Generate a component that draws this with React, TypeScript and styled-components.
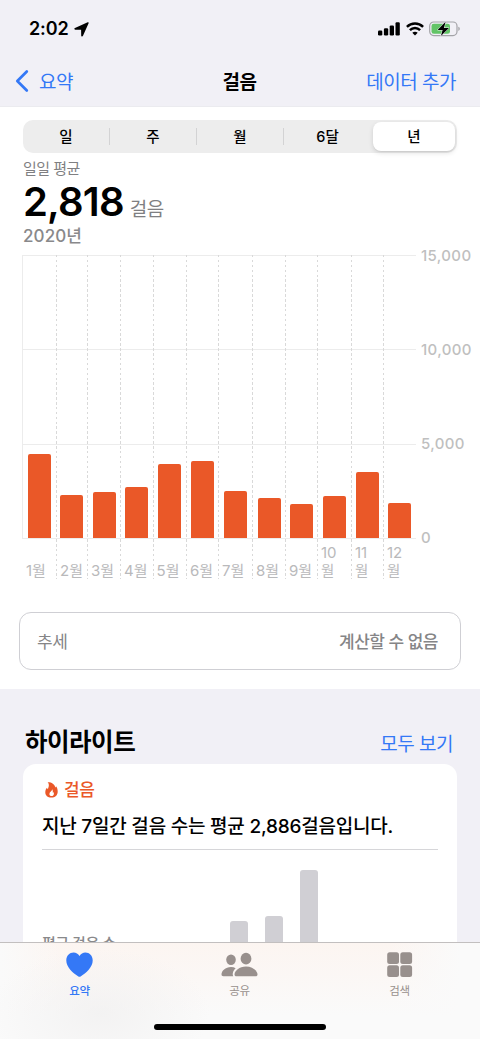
import React from 'react';
import styled, { createGlobalStyle } from 'styled-components';

const BLUE = '#3478f6';
const ORANGE = '#ea5828';

const GlobalStyle = createGlobalStyle`
  * { box-sizing: border-box; }
  body {
    margin: 0;
    font-family: Inter, "Noto Sans CJK KR", sans-serif;
    color: #000;
    background: #f1f0f6;
  }
`;

const Screen = styled.div`
  position: relative;
  width: 480px;
  height: 1039px;
  overflow: hidden;
  background: #f1f0f6;
  display: flex;
  flex-direction: column;
`;

const Label = styled.span<{ $size: number; $weight?: number; $color?: string; $track?: number; $line?: number }>`
  font-size: ${p => p.$size}px;
  font-weight: ${p => p.$weight ?? 400};
  color: ${p => p.$color ?? '#000'};
  letter-spacing: ${p => p.$track ?? 0}px;
  line-height: ${p => p.$line ?? 24}px;
  white-space: nowrap;
`;

const StatusBar = styled.div`
  height: 56px;
  flex: none;
  display: flex;
  align-items: center;
  justify-content: space-between;
  padding: 2px 19px 0 29px;
`;

const StatusGroup = styled.div<{ $gap: number }>`
  display: flex;
  align-items: center;
  gap: ${p => p.$gap}px;
`;

const NavBar = styled.div`
  height: 51px;
  flex: none;
  display: grid;
  grid-template-columns: 1fr auto 1fr;
  align-items: center;
  padding: 0 24px 0 15px;
  border-bottom: 1px solid #ebebef;
`;

const BackButton = styled.div`
  display: flex;
  align-items: center;
  gap: 9px;
`;

const BackText = styled.div`
  display: flex;
  padding-top: 3px;
`;

const NavTitle = styled.div`
  padding: 3px 0 0 8px;
  display: flex;
`;

const NavAction = styled.div`
  display: flex;
  justify-content: flex-end;
  padding-top: 3px;
`;

const Panel = styled.section`
  height: 582px;
  flex: none;
  background: #fff;
  padding-top: 13px;
`;

const Segmented = styled.div`
  margin: 0 23px;
  height: 33px;
  width: 434px;
  border-radius: 10px;
  background: #ededed;
  display: flex;
  align-items: center;
  padding: 2px 2px 2px 0;
`;

const Segment = styled.div<{ $active?: boolean; $divider?: boolean }>`
  flex: 0 0 ${p => (p.$active ? 82 : 87)}px;
  margin-left: ${p => (p.$active ? 'auto' : 0)};
  height: ${p => (p.$active ? 29 : 17)}px;
  display: flex;
  align-items: center;
  justify-content: center;
  border-right: ${p => (p.$divider ? '1px solid #d3d3d4' : '0')};
  border-radius: ${p => (p.$active ? 8 : 0)}px;
  background: ${p => (p.$active ? '#fff' : 'transparent')};
  box-shadow: ${p => (p.$active ? '0 2px 5px rgba(0,0,0,.12), 0 1px 1px rgba(0,0,0,.05)' : 'none')};
`;

const Summary = styled.div`
  display: flex;
  flex-direction: column;
  padding: 6px 0 0 23px;
  height: 102px;
`;

const ValueRow = styled.div`
  display: flex;
  align-items: baseline;
  gap: 6px;
  height: 46px;
`;

const Chart = styled.div`
  display: flex;
  padding-left: 22px;
  height: 324px;
`;

const Plot = styled.div`
  display: grid;
  width: 394px;
  height: 324px;
  & > * { grid-area: 1 / 1; }
`;

const GridLines = styled.div`
  height: 284px;
  border-left: 1px solid #ececec;
  display: flex;
  flex-direction: column;
  justify-content: space-between;
`;

const GridLine = styled.div`
  height: 1px;
  background: #ececec;
`;

const Months = styled.div`
  display: flex;
  height: 324px;
`;

const Month = styled.div<{ $width: number; $first: boolean }>`
  flex: 0 0 ${p => p.$width}px;
  display: flex;
  flex-direction: column;
  padding-left: 4px;
  background: ${p =>
    p.$first
      ? 'none'
      : 'repeating-linear-gradient(#d9d9d9 0 2.5px, transparent 2.5px 4.9px) left top / 1px 100% no-repeat'};
`;

const BarSlot = styled.div<{ $inset: number }>`
  height: 283px;
  flex: none;
  display: flex;
  align-items: flex-end;
  padding-left: ${p => p.$inset}px;
`;

const Bar = styled.div<{ $h: number }>`
  width: 23px;
  height: ${p => p.$h}px;
  border-radius: 2px 2px 0 0;
  background: ${ORANGE};
`;

const MonthLabel = styled.div`
  height: 42px;
  flex: none;
  display: flex;
  flex-direction: column;
  justify-content: flex-end;
`;

const Axis = styled.div`
  height: 302px;
  margin-top: -9px;
  padding-left: 5px;
  display: flex;
  flex-direction: column;
  justify-content: space-between;
`;

const Trend = styled.div`
  margin: 33px 19px 0 19px;
  height: 58px;
  border: 1px solid #cfcfd4;
  border-radius: 12px;
  display: flex;
  align-items: center;
  justify-content: space-between;
  padding: 2px 22px 0 17px;
`;

const SectionHead = styled.div`
  height: 75px;
  flex: none;
  display: flex;
  justify-content: space-between;
  align-items: flex-end;
  padding: 0 27px 6px 25px;
`;

const Card = styled.section`
  flex: none;
  margin: 0 23px;
  height: 300px;
  border-radius: 13px;
  background: #fff;
  padding: 14px 19px 0;
  display: flex;
  flex-direction: column;
`;

const CardTag = styled.div`
  display: flex;
  align-items: center;
  gap: 6px;
  padding-left: 3px;
  height: 24px;
`;

const CardTitle = styled.div`
  display: flex;
  align-items: center;
  height: 48px;
  padding-top: 3px;
  border-bottom: 1px solid #d6d6d9;
`;

const CardBody = styled.div`
  display: flex;
  padding-top: 20px;
`;

const CardCaption = styled.div`
  width: 188px;
  padding-top: 62px;
`;

const MiniBars = styled.div`
  display: flex;
  gap: 17px;
  align-items: flex-end;
  height: 130px;
`;

const MiniBar = styled.div<{ $h: number }>`
  width: 18px;
  height: ${p => p.$h}px;
  border-radius: 3px 3px 0 0;
  background: #d0cfd4;
`;

const TabBar = styled.nav`
  position: absolute;
  left: 0;
  right: 0;
  bottom: 0;
  height: 97px;
  border-top: 1px solid #c2bfbf;
  background:
    radial-gradient(ellipse 110px 65px at 100px 70px, rgba(240,239,239,.7), transparent),
    linear-gradient(90deg, #fafafa 0, transparent 60px, transparent 390px, #fafafa 460px),
    linear-gradient(#fcf5f1, #fafafa 75%);
  display: flex;
  flex-direction: column;
  justify-content: space-between;
  align-items: center;
`;

const Tabs = styled.div`
  display: flex;
  width: 100%;
`;

const Tab = styled.div`
  flex: 1;
  display: flex;
  flex-direction: column;
  align-items: center;
  gap: 1px;
  padding-right: 1px;
  padding-top: 9px;
`;

const HomeIndicator = styled.div`
  width: 172px;
  height: 6px;
  border-radius: 3px;
  background: #000;
  margin-bottom: 9px;
`;

const LocationIcon = () => (
  <svg width="15" height="15" viewBox="0 0 15 15">
    <path d="M13.7.3 1 5.900c-1.200.5-.9 1.800.3 1.800l5.800.1.1 5.600c0 1.200 1.300 1.500 1.800.3L14.600 1.300c.3-.7-.1-1.300-.9-1z" fill="#000" />
  </svg>
);

const SignalIcon = () => (
  <svg width="22" height="14" viewBox="0 0 22 14">
    <rect x="0" y="8.500" width="4.300" height="4.900" rx="1.200" />
    <rect x="5.900" y="6.300" width="4.300" height="7.100" rx="1.200" />
    <rect x="11.700" y="3.400" width="4.300" height="10" rx="1.200" />
    <rect x="17.500" y="0.300" width="4.300" height="13.100" rx="1.200" />
  </svg>
);

const WifiIcon = () => (
  <svg width="18" height="14" viewBox="0 0 18 14" fill="none" stroke="#000" strokeWidth="2.500">
    <path d="M.9 4.900C5.500.5 12.500.5 17.100 4.900" />
    <path d="M3.900 8.200c2.900-2.900 7.300-2.900 10.200 0" />
    <path d="M9 13.500 6.300 10.800c1.500-1.400 3.900-1.400 5.400 0z" fill="#000" stroke="none" />
  </svg>
);

const BatteryIcon = () => (
  <svg width="32" height="16" viewBox="0 0 32 16">
    <rect x="0.700" y="1" width="27.300" height="13.600" rx="4" fill="none" stroke="#a3a3a7" strokeWidth="1.200" />
    <path d="M29.300 5.800c2 .6 2 3.500 0 4.100z" fill="#a3a3a7" />
    <rect x="2.500" y="2.800" width="18.500" height="10" rx="2.300" fill="#62c466" />
    <path d="M16.600.8 8.600 9h5l-1.700 6L20 7h-5.100z" fill="#000" stroke="#f1f0f6" strokeWidth="1" paintOrder="stroke" />
  </svg>
);

const ChevronIcon = () => (
  <svg width="15" height="24" viewBox="0 0 15 24" fill="none">
    <path d="M11.800 2.500 2.300 12l9.500 9.500" stroke={BLUE} strokeWidth="2.700" strokeLinecap="round" strokeLinejoin="round" />
  </svg>
);

const FlameIcon = () => (
  <svg width="13" height="16" viewBox="0 0 13 16">
    <path
      fillRule="evenodd"
      fill={ORANGE}
      d="M2.600.3c4.200-.1 7 1.900 7.700 5.200.4-.4.6-.8.700-1.300 1.100 1.400 1.700 3.200 1.700 5.200 0 3.900-2.600 6.200-6.300 6.200C2.600 15.600.3 13.400.3 10.200c0-2.100.8-3.400 1.700-4.400.1.600.4 1.100.9 1.400C3.500 5.300 4.900 2.500 2.600.3zM7.100 7.300c.2 1.600-2.700 2.700-2.700 4.600 0 1.300 1 2.100 2.200 2.100s2.300-.9 2.300-2.300c0-.8-.2-1.300-.5-1.700-.1.400-.3.600-.6.800.1-1.200.1-2.500-.7-3.500z"
    />
  </svg>
);

const HeartIcon = () => (
  <svg width="27" height="26" viewBox="0 0 27 26">
    <path d="M13.500 3.900C12.200 1.900 10.100.6 7.600.6 3.600.6.300 3.800.3 8.400c0 6.700 6.600 12.600 12.100 16 .8.500 1.400.5 2.200 0C20.100 21 26.700 15.100 26.700 8.400c0-4.600-3.300-7.800-7.300-7.800-2.500 0-4.600 1.300-5.900 3.300z" fill={BLUE} />
  </svg>
);

const PeopleIcon = () => (
  <svg width="37" height="26" viewBox="0 0 37 26" fill="#98908d">
    <ellipse cx="10" cy="7.700" rx="4.800" ry="5.200" />
    <ellipse cx="25" cy="6.700" rx="5.400" ry="5.900" />
    <path d="M14.700 16.300c-1.300-.8-2.900-1.200-4.700-1.200-5.600 0-9.500 4-9.500 7.500 0 1.200.7 1.700 1.900 1.700h9.900c-1.400-2.500.1-6 2.400-8z" />
    <path d="M25 14.500c-6.700 0-11.500 4.400-11.500 8 0 1.200.7 1.800 2 1.800h19c1.300 0 2-.6 2-1.800 0-3.600-4.800-8-11.500-8z" />
  </svg>
);

const GridIcon = () => (
  <svg width="26" height="26" viewBox="0 0 26 26" fill="#98908d">
    <rect x=".2" y=".3" width="11.800" height="11.800" rx="2.500" />
    <rect x="13.300" y=".3" width="11.800" height="11.800" rx="2.500" />
    <rect x=".2" y="13.300" width="11.800" height="11.800" rx="2.500" />
    <rect x="13.300" y="13.300" width="11.800" height="11.800" rx="2.500" />
  </svg>
);

const segments = ['일', '주', '월', '6달', '년'];

const months = [
  { n: 1, w: 34, h: 84, inset: 2 },
  { n: 2, w: 31, h: 43.5, inset: 0.3 },
  { n: 3, w: 33, h: 46.5, inset: 2 },
  { n: 4, w: 32.5, h: 51.5, inset: 1 },
  { n: 5, w: 33.5, h: 73.7, inset: 1.3 },
  { n: 6, w: 32, h: 77, inset: 1.3 },
  { n: 7, w: 34, h: 47, inset: 2 },
  { n: 8, w: 33, h: 40, inset: 1.5 },
  { n: 9, w: 32, h: 34, inset: 1.2 },
  { n: 10, w: 34, h: 42.2, inset: 2 },
  { n: 11, w: 32, h: 66, inset: 1 },
  { n: 12, w: 32, h: 34.8, inset: 1.4 },
];

const tabs = [
  { name: '요약', icon: <HeartIcon />, color: BLUE },
  { name: '공유', icon: <PeopleIcon />, color: '#98908d' },
  { name: '검색', icon: <GridIcon />, color: '#98908d' },
];

export default function App() {
  return (
    <>
      <GlobalStyle />
      <Screen>
        <StatusBar>
          <StatusGroup $gap={5}>
            <Label $size={18} $weight={600} $track={-0.1} $line={24}>2:02</Label>
            <LocationIcon />
          </StatusGroup>
          <StatusGroup $gap={5.5}>
            <SignalIcon />
            <WifiIcon />
            <BatteryIcon />
          </StatusGroup>
        </StatusBar>
        <NavBar>
          <BackButton>
            <ChevronIcon />
            <BackText>
              <Label $size={19} $color={BLUE} $track={-0.5}>요약</Label>
            </BackText>
          </BackButton>
          <NavTitle>
            <Label $size={19} $weight={600} $track={-0.5}>걸음</Label>
          </NavTitle>
          <NavAction>
            <Label $size={19} $color={BLUE} $track={-0.5}>데이터 추가</Label>
          </NavAction>
        </NavBar>

        <Panel>
          <Segmented>
            {segments.map((s, i) => (
              <Segment key={s} $active={i === 4} $divider={i < 3}>
                <Label $size={14.5} $weight={500}>{s}</Label>
              </Segment>
            ))}
          </Segmented>
          <Summary>
            <Label $size={15} $weight={400} $color="#7f7f82" $track={-0.5} $line={20}>일일 평균</Label>
            <ValueRow>
              <Label $size={40} $weight={600} $track={-0.8} $line={46}>2,818</Label>
              <Label $size={19} $weight={400} $color="#7f7f82" $track={-0.5}>걸음</Label>
            </ValueRow>
            <Label $size={17} $weight={500} $color="#89898b" $track={0.1} $line={23}>2020년</Label>
          </Summary>
          <Chart>
            <Plot>
              <GridLines>
                <GridLine />
                <GridLine />
                <GridLine />
                <GridLine />
              </GridLines>
              <Months>
                {months.map(m => (
                  <Month key={m.n} $width={m.w} $first={m.n === 1}>
                    <BarSlot $inset={m.inset}>
                      <Bar $h={m.h} />
                    </BarSlot>
                    <MonthLabel>
                      {m.n > 9 ? (
                        <>
                          <Label $size={15} $color="#b9b9bb" $line={18}>{m.n}</Label>
                          <Label $size={14.5} $color="#b9b9bb" $line={18}>월</Label>
                        </>
                      ) : (
                        <Label $size={15} $color="#b9b9bb" $line={18}>{m.n}월</Label>
                      )}
                    </MonthLabel>
                  </Month>
                ))}
              </Months>
            </Plot>
            <Axis>
              {['15,000', '10,000', '5,000', '0'].map(v => (
                <Label key={v} $size={15} $weight={500} $color="#bfbfc0" $track={0.35} $line={20}>{v}</Label>
              ))}
            </Axis>
          </Chart>
          <Trend>
            <Label $size={17} $color="#858587" $track={-0.5}>추세</Label>
            <Label $size={17} $weight={500} $color="#858587" $track={-0.5}>계산할 수 없음</Label>
          </Trend>
        </Panel>

        <SectionHead>
          <Label $size={24.5} $weight={700} $track={-0.5} $line={32}>하이라이트</Label>
          <Label $size={19} $color={BLUE} $track={-0.5} $line={26}>모두 보기</Label>
        </SectionHead>
        <Card>
          <CardTag>
            <FlameIcon />
            <Label $size={17} $weight={500} $color={ORANGE} $track={-0.5}>걸음</Label>
          </CardTag>
          <CardTitle>
            <Label $size={19} $weight={500} $track={-0.22}>지난 7일간 걸음 수는 평균 2,886걸음입니다.</Label>
          </CardTitle>
          <CardBody>
            <CardCaption>
              <Label $size={15} $weight={500} $color="#89898b" $track={-0.5}>평균 걸음 수</Label>
            </CardCaption>
            <MiniBars>
              <MiniBar $h={79} />
              <MiniBar $h={84} />
              <MiniBar $h={130} />
            </MiniBars>
          </CardBody>
        </Card>

        <TabBar>
          <Tabs>
            {tabs.map(t => (
              <Tab key={t.name}>
                {t.icon}
                <Label $size={11.5} $weight={t.color === BLUE ? 500 : 400} $color={t.color} $track={-0.3}>{t.name}</Label>
              </Tab>
            ))}
          </Tabs>
          <HomeIndicator />
        </TabBar>
      </Screen>
    </>
  );
}
